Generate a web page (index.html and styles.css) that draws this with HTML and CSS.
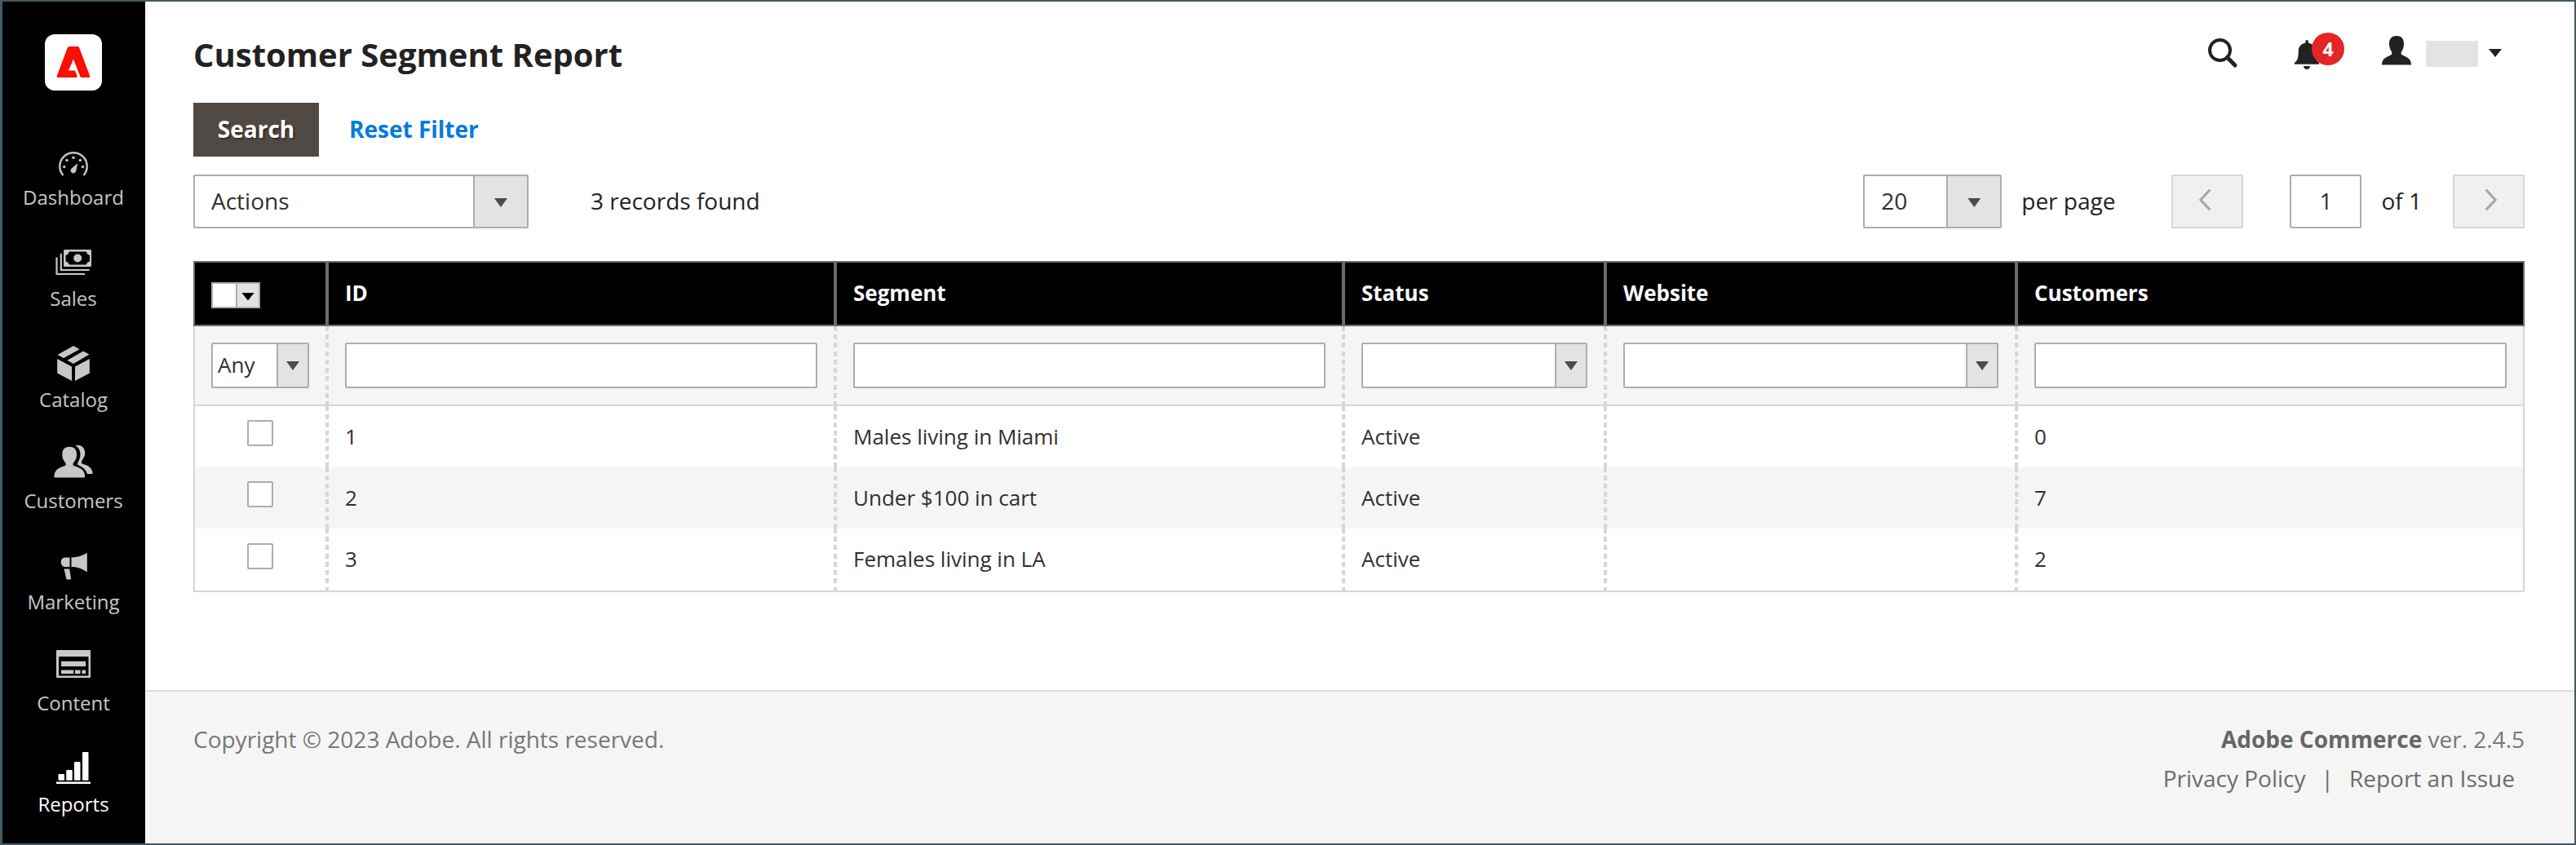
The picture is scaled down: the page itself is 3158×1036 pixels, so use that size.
FILE: index.html
```html
<!DOCTYPE html>
<html lang="en">
<head>
<meta charset="utf-8">
<title>Customer Segment Report</title>
<link rel="stylesheet" href="styles.css">
</head>
<body>
<div class="app">
  <nav class="sidebar">
    <a class="logo"><svg width="42" height="38" viewBox="0 0 42 38"><path fill="#fa0f00" d="M15.500 0h11L28 1 41.300 36.500 40.500 38H31q-1.200 0-1.700-1.200L21 15.500 15 29.500h7q1 0 1.500 1.200l2.300 6.100-.8 1.200H1.200L.5 36.700 14 1z"/></svg></a>
    <a class="nav-item">
      <svg width="48" height="48" viewBox="0 0 48 48"><path d="M11.500 37A16.700 16.700 0 1 1 36.500 37" fill="none" stroke="currentColor" stroke-width="2.400"/><g fill="currentColor"><circle cx="12.700" cy="26.500" r="1.700"/><circle cx="16" cy="18.500" r="1.700"/><circle cx="24" cy="15.200" r="1.700"/><circle cx="32.300" cy="18.500" r="1.700"/><circle cx="35.500" cy="26.500" r="1.700"/><path d="M29.200 22.300 22.300 28a3.400 3.400 0 1 0 5 3.500z"/></g></svg>
      <span>Dashboard</span></a>
    <a class="nav-item">
      <svg width="48" height="48" viewBox="0 2 48 48"><path d="M3.500 15.500V36H38M8.800 11V31H43.500" fill="none" stroke="currentColor" stroke-width="2.200"/><path fill="currentColor" fill-rule="evenodd" d="M13.500 6h31q1.500 0 1.500 1.500V25.500q0 1.500-1.500 1.500h-31q-1.500 0-1.500-1.500V7.500Q12 6 13.500 6zM19 8.500 17 12l-2.500 1v7.500L17 21.500l2 3h20.500l2-3 2.500-1V13l-2.500-1-2-3.500z"/><circle cx="29.200" cy="16.500" r="5" fill="currentColor"/></svg>
      <span>Sales</span></a>
    <a class="nav-item">
      <svg width="48" height="48" viewBox="0 2 48 48"><path fill="currentColor" d="M24 0l7.500 4.300L12 15 4.500 11zM36 6.500l7.500 4L24 22l-7.500-4.300zM4.200 16 22 25.500V43L4.200 33.500zM43.800 16 26 25.500V43L43.800 33.500z"/></svg>
      <span>Catalog</span></a>
    <a class="nav-item">
      <svg width="48" height="48" viewBox="0 5.500 48 48"><path fill="currentColor" d="M0.500 41V39C1 31 7 28.700 14 26.500c1.500-1 .7-3-.5-4.500-2.500-3-3.200-6-3.200-9C10.300 6 14 3.200 19.200 3.200S28 6 28 13c0 3-1 6.500-3.400 9-1.200 1.500-1.800 3.500-.4 4.500C31 28.500 38 31 38 39v1q0 1-1 1z"/><path fill="currentColor" d="M26.500 1.700C33 0 38.200 4 38.200 11c0 5-2.500 6-4 10-1 2.600 0 3 2 3.500C42 26 47.600 29.500 47.600 36.500H41c-2-6-6.500-8.700-12-11.200 0-4 3.500-6 3.500-12.300 0-5-2-9-6-11.300z"/></svg>
      <span>Customers</span></a>
    <a class="nav-item">
      <svg width="48" height="48" viewBox="0 6 48 48"><path fill="currentColor" d="M19.500 15.500V27H13a6 6 0 0 1 0-11.500zM21.500 15.500C30 15.500 35 13 40.800 9.800V33.500C35 29.500 30 27 21.500 27zM12.500 29.500h6.700l1.800 12q0 1-1 1h-4.500z"/></svg>
      <span>Marketing</span></a>
    <a class="nav-item">
      <svg width="48" height="48" viewBox="0 6 48 48"><path fill="currentColor" fill-rule="evenodd" d="M4 5h40q1 0 1 1V38q0 1-1 1H4q-1 0-1-1V6Q3 5 4 5zM6 13V36.500H42.500V13zM9 18.700H39v6.400H9zM9 29.500H24.200V34H9zM26 29.500H32.500V34H26zM34.500 29.500H39V34H34.500z"/></svg>
      <span>Content</span></a>
    <a class="nav-item active">
      <svg width="48" height="48" viewBox="0 5 48 48"><path fill="currentColor" d="M3 41.500H45V44H3z"/><g fill="currentColor"><rect x="5.500" y="32" width="7.500" height="7.700" rx="1"/><rect x="15.200" y="27" width="7.500" height="12.700" rx="1"/><rect x="25" y="17" width="7.500" height="22.700" rx="1"/><rect x="35" y="5" width="7.500" height="34.700" rx="1"/></g></svg>
      <span>Reports</span></a>
  </nav>
  <div class="page">
    <header class="header">
      <h1>Customer Segment Report</h1>
      <div class="tools">
        <svg class="search" width="36" height="36" viewBox="0 0 36 36" fill="none" stroke="#222"><circle cx="14.500" cy="14.500" r="12.500" stroke-width="4"/><path d="M23.500 23.500 33 33" stroke-width="5" stroke-linecap="round"/></svg>
        <div class="bell"><svg width="32" height="36" viewBox="0 0 32 36" fill="#222"><path d="M13.300 3.500V2q0-2 1.800-2t1.800 2v1.500C23 5 25.500 9 25.500 14c0 8 1 11 4.500 14v1.700H0V28c3.500-3 4.700-6 4.700-14C4.700 9 7 5 13.300 3.500zM11 32h8q-.5 4-4 4t-4-4z"/></svg><span class="badge">4</span></div>
        <svg class="user" width="36" height="36" viewBox="0 0 36 36" fill="#222"><path d="M0 35.500C0 28 5 26 11 23.500c2-1 1.600-3.500.3-5C10 16 9 13 9 9.500 9 3 12.500 0 18 0s9 3 9 9.500c0 3.500-1 6.500-2.300 9-1.300 1.500-1.700 4 .3 5C31 26 36 28 36 35.500z"/></svg>
        <span class="account"></span>
        <i class="caret dark"></i>
      </div>
    </header>
    <div class="buttons"><button class="primary">Search</button><a class="reset">Reset Filter</a></div>
    <div class="toolbar">
      <div class="select actions"><span>Actions</span><b><i class="caret"></i></b></div>
      <span class="found">3 records found</span>
      <div class="select size"><span>20</span><b><i class="caret"></i></b></div>
      <span class="per">per page</span>
      <div class="pager"><svg width="14" height="26" viewBox="0 0 14 26"><path d="M12.500 1.500 1.800 13 12.500 24.500"/></svg></div>
      <div class="current">1</div>
      <span class="of">of 1</span>
      <div class="pager next"><svg width="14" height="26" viewBox="0 0 14 26"><path d="M1.500 1.500 12.200 13 1.500 24.500"/></svg></div>
    </div>
    <div class="grid">
      <div class="row head"><div><div class="multi"><b><i class="caret black"></i></b></div></div><div>ID</div><div>Segment</div><div>Status</div><div>Website</div><div>Customers</div></div>
      <div class="row filters"><div><div class="select any"><span>Any</span><b><i class="caret"></i></b></div></div><div><div class="input"></div></div><div><div class="input"></div></div><div><div class="select"><span></span><b><i class="caret"></i></b></div></div><div><div class="select"><span></span><b><i class="caret"></i></b></div></div><div><div class="input"></div></div></div>
      <div class="row"><div><i class="check"></i></div><div>1</div><div>Males living in Miami</div><div>Active</div><div></div><div>0</div></div>
      <div class="row even"><div><i class="check"></i></div><div>2</div><div>Under $100 in cart</div><div>Active</div><div></div><div>7</div></div>
      <div class="row last"><div><i class="check"></i></div><div>3</div><div>Females living in LA</div><div>Active</div><div></div><div>2</div></div>
    </div>
    <footer class="footer">
      <span>Copyright © 2023 Adobe. All rights reserved.</span>
      <div class="legal">
        <div><strong>Adobe Commerce</strong> ver. 2.4.5</div>
        <div class="links"><a>Privacy Policy</a><span>|</span><a>Report an Issue</a></div>
      </div>
    </footer>
  </div>
</div>
</body>
</html>
```
FILE: styles.css
```css
* { box-sizing: border-box; }
body { margin: 0; font-family: "Open Sans", "Noto Sans", sans-serif; font-size: 28px; color: #222; background: #fff; }
svg { display: block; flex: none; overflow: visible; }
.app { display: flex; width: 3158px; height: 1036px; border: 2px solid #455a64; border-left-width: 3px; overflow: hidden; }
.sidebar { flex: none; width: 175px; background: #000; display: flex; flex-direction: column; align-items: center; padding-top: 40px; }
.logo { flex: none; display: flex; align-items: center; justify-content: center; width: 70px; height: 69px; margin-right: 1px; border-radius: 12px; background: #fff; padding-bottom: 2px; }
.nav-item { flex: none; display: flex; flex-direction: column; align-items: center; height: 124px; color: #c7c7c7; font-size: 24px; line-height: 34px; margin-right: 1px; }
.logo + .nav-item { margin-top: 67px; }
.nav-item span { margin-top: -1px; }
.nav-item.active { height: 108px; color: #fff; }
.page { flex: 1; display: flex; flex-direction: column; padding-left: 59px; }

.header { display: flex; justify-content: space-between; align-items: flex-start; height: 124px; }
h1 { margin: 37px 0 0; font-size: 40px; line-height: 56px; font-weight: 700; }
.tools { display: flex; align-items: flex-start; padding: 38px 89px 0 0; }
.search { margin: 7px 70px 0 0; }
.bell { position: relative; margin: 9px 75px 0 0; }
.badge { position: absolute; left: 21px; top: -9px; width: 40px; height: 40px; border-radius: 20px; background: #e22626; color: #fff; font-size: 23px; font-weight: 700; line-height: 40px; text-align: center; }
.user { margin: 4px 18px 0 0; }
.account { width: 64px; height: 32px; margin: 10px 13px 0 0; background: #e3e3e3; }

.caret { display: block; width: 16px; height: 11px; background: #514943; clip-path: polygon(0 0, 100% 0, 50% 100%); }
.caret.dark { margin-top: 20px; background: #222; height: 10px; }
.caret.black { background: #000; height: 10px; }

.buttons { display: flex; align-items: center; height: 66px; font-weight: 700; }
.primary { width: 154px; height: 66px; padding: 0 0 2px; border: 0; background: #514943; color: #fff; font: inherit; text-shadow: 2px 2px 2px rgba(0, 0, 0, .4); }
.reset { margin-left: 37px; padding-bottom: 2px; color: #007bdb; }

.toolbar { display: flex; align-items: center; height: 66px; margin: 22px 61px 40px 0; }
.toolbar > span { padding-bottom: 2px; }
.select { display: flex; width: 100%; height: 56px; border: 2px solid #adadad; border-radius: 2px; background: #fff; color: #303030; }
.select span { flex: 1; }
.select b { display: flex; align-items: center; justify-content: center; width: 38px; border-left: 2px solid #adadad; background: #e3e3e3; }
.select .caret { margin-top: 1px; }
.actions, .size { height: 66px; line-height: 60px; }
.actions { width: 411px; }
.actions span, .size span { padding-left: 20px; }
.actions b, .size b { width: 66px; }
.actions .caret, .size .caret { margin-top: 3px; }
.size { width: 170px; margin-left: auto; }
.found { margin-left: 76px; }
.per { margin: 0 69px 0 24px; }
.pager, .current { display: flex; align-items: center; justify-content: center; width: 88px; height: 66px; border: 2px solid #adadad; border-radius: 2px; padding-bottom: 2px; }
.pager { border-color: #d6d6d6; border-radius: 0; background: #f0f0f0; padding: 0 6px 4px 0; }
.pager path { fill: none; stroke: #a8a4a1; stroke-width: 3; stroke-linecap: round; }
.pager.next { padding: 0 0 4px 6px; }
.current { margin-left: 57px; color: #303030; }
.of { margin: 0 38px 0 24px; }

.grid { width: 2858px; font-size: 26px; color: #303030; }
.row { display: grid; grid-template-columns: 164px 623px 623px 321px 504px 619px; height: 75px; line-height: 35px; border: solid #d6d6d6; border-width: 0 2px; --step: 9.857px; }
.row > div { padding: 19.500px 20px 0; background: repeating-linear-gradient(#d6d6d6 0 6px, transparent 6px var(--step)) right top / 4px 100% no-repeat; }
.row > div:not(:last-child) { padding-right: 24px; }
.row > div:last-child { background: none; }
.head { height: 80px; border: 2px solid #6b6b6b; background: #000; color: #fff; font-weight: 700; }
.head > div { background: linear-gradient(#6b6b6b, #6b6b6b) right top / 4px 100% no-repeat; }
.head > div:first-child { padding-top: 24px; }
.multi { display: flex; justify-content: flex-end; width: 60px; height: 32px; background: #fff; border: 2px solid #adadad; }
.multi b { display: flex; align-items: center; justify-content: center; width: 28px; padding-top: 3px; border-left: 2px solid #adadad; background: #e3e3e3; }
.filters { height: 98px; border-bottom: 2px solid #d6d6d6; background: #f5f5f5; --step: 10.222px; }
.filters > div { padding-top: 20px; }
.input { height: 56px; border: 2px solid #adadad; border-radius: 2px; background: #fff; }
.any { line-height: 50px; }
.any span { padding-left: 6px; }
.even { background: #f5f5f5; }
.last { height: 78px; border-bottom-width: 2px; --step: 10.222px; }
.check { display: block; width: 32px; height: 32px; margin: -2.500px auto 0; border: 2px solid #adadad; border-radius: 2px; background: #fff; }
.last .check { margin-top: -1.500px; }

.footer { display: flex; justify-content: space-between; flex: 1; margin: 120px 0 0 -59px; padding: 34px 61px 0 59px; border-top: 2px solid #dcdcdc; background: #f5f5f5; color: #777; line-height: 48px; }
.legal { text-align: right; }
.legal strong { color: #666; }
.links { display: flex; justify-content: flex-end; color: #6c6c6c; padding-right: 12px; }
.links span { margin: 0 19px; }
```
